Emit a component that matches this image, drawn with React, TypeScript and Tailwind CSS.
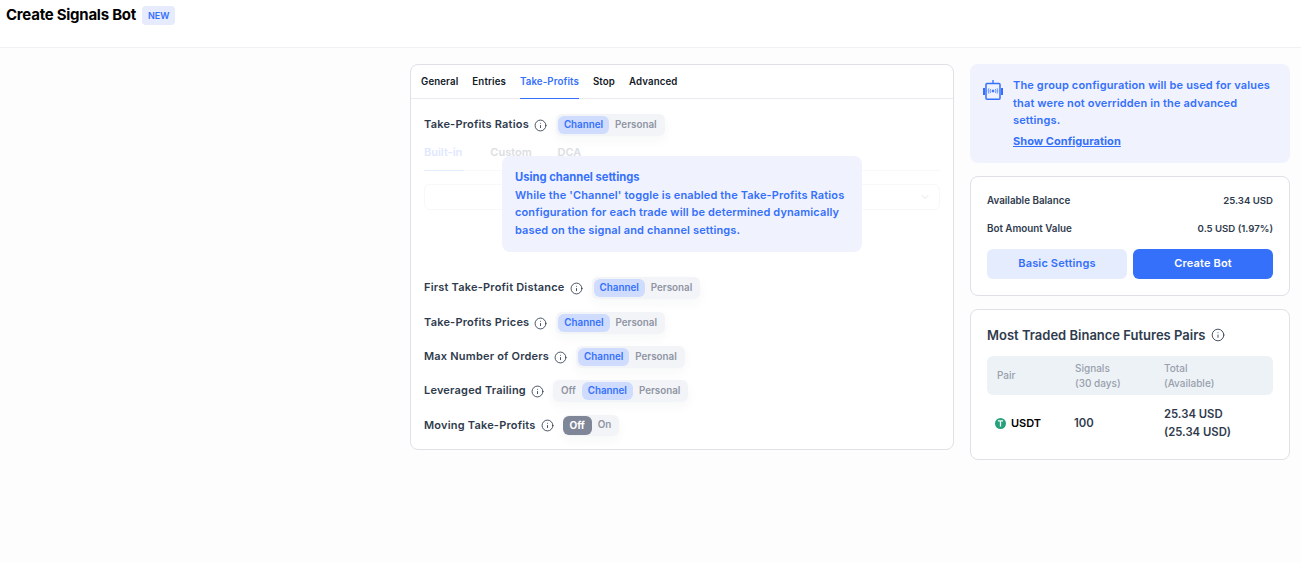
import { ChevronDown, Info } from "lucide-react";

const Segment = ({ options, active }: { options: string[]; active: string }) => (
  <div
    className={
      active === "Off"
        ? "flex h-[21px] items-center rounded-md bg-[#f3f4f8] pr-[2px] shadow-[0_4px_12px_rgba(30,40,60,0.04)]"
        : "flex h-[22px] items-center rounded-md bg-[#f3f4f8] p-[2px] shadow-[0_4px_12px_rgba(30,40,60,0.04)]"
    }
  >
    {options.map((option) => (
      <div
        key={option}
        className={
          option === active
            ? active === "Off"
              ? "flex h-[19px] items-center rounded-md bg-[#7f8697] px-[7px] text-[10px] font-bold text-white"
              : "flex h-[18px] items-center rounded-md bg-[#cfdcfd] px-[6px] text-[9.8px] font-semibold text-[#3570fb]"
            : "flex h-[18px] items-center px-[6px] text-[9.8px] font-semibold text-[#8f95a3]"
        }
      >
        {option}
      </div>
    ))}
  </div>
);

const SettingRow = ({ label, options, active, className }: { label: string; options: string[]; active: string; className: string }) => (
  <div className={`flex items-center ${className}`}>
    <span className="pb-[1px] text-[11px] font-semibold tracking-[0.2px] text-[#2f3b4d]">{label}</span>
    <Info className="ml-[5px] mr-[9px] h-[13px] w-[13px] text-[#2f3b4d]" strokeWidth={1.6} />
    <Segment options={options} active={active} />
  </div>
);

const RobotIcon = () => (
  <svg viewBox="0 0 20 20" className="h-5 w-5 shrink-0 text-[#3570fb]" fill="none" stroke="currentColor">
    <path d="M10 0v3.5" strokeWidth="1.3" />
    <rect x="3" y="3.6" width="14" height="15.6" rx="1" strokeWidth="1.5" />
    <path d="M1 8v7M19 8v7" strokeWidth="2" />
    <circle cx="10" cy="11" r="1" fill="currentColor" />
    <path d="M7.6 9c-.7 1.2-.7 2.8 0 4M12.4 9c.7 1.2.7 2.8 0 4M5.9 8.3c-.9 1.6-.9 3.8 0 5.4M14.1 8.3c.9 1.6.9 3.8 0 5.4" strokeWidth="0.8" />
  </svg>
);

const tabs = ["General", "Entries", "Take-Profits", "Stop", "Advanced"];
const channelOptions = ["Channel", "Personal"];

export default function App() {
  return (
    <div className="min-h-[563px] bg-[#fdfdfe] font-['Inter',sans-serif]">
      {/* Header */}
      <div className="flex h-[48px] items-start gap-[6px] border-b border-[#f0f1f4] bg-white pl-[6px] pt-[5px]">
        <h1 className="text-[15px] leading-[20px] font-bold tracking-[-0.25px] text-black">Create Signals Bot</h1>
        <span className="mt-[1px] flex h-[19px] items-center rounded bg-[#e6ebfd] px-[6px] text-[9px] font-semibold text-[#3570fb]">NEW</span>
      </div>

      <div className="flex items-start gap-4 pl-[410px] pr-[11px] pt-[16px]">
        {/* Main settings card */}
        <div className="h-[386px] w-[544px] shrink-0 rounded-lg border border-[#dfe1e7] bg-white">
          <div className="flex h-[34px] gap-[14px] border-b border-[#e8eaee] px-[10px]">
            {tabs.map((tab) => (
              <div
                key={tab}
                className={
                  tab === "Take-Profits"
                    ? "-mb-px flex items-center border-b border-[#3570fb] pt-[2px] text-[9.7px] font-semibold tracking-[0.12px] text-[#3570fb]"
                    : "flex items-center pt-[2px] text-[9.7px] font-semibold tracking-[0.12px] text-[#111827]"
                }
              >
                {tab}
              </div>
            ))}
          </div>

          <div className="relative px-[13px] pt-[15px]">
            <SettingRow label="Take-Profits Ratios" options={channelOptions} active="Channel" className="" />

            {/* Faded ratio settings under the popover */}
            <div className="mt-[6px] flex h-[29px] gap-[26px] border-b border-[#f7f8f9] text-[11px] font-semibold text-[#dcdee3]">
              <span className="-mb-px border-b border-[#e3ebfe] pr-[2px] pt-[2px] text-[#dfe8fe]">Built-in</span>
              <span className="pt-[2px]">Custom</span>
              <span className="pt-[2px]">DCA</span>
            </div>
            <div className="mt-[13px] flex h-[26px] w-[516px] items-center justify-end rounded-md border border-[#f7f8f9] pr-[8px]">
              <ChevronDown className="h-3 w-3 text-[#e5e7eb]" />
            </div>

            <div className="absolute left-[91px] top-[57px] w-[360px] rounded-lg bg-[#f0f3fe] px-[13px] pb-[13px] pt-[13px] text-[11px] leading-[17.5px] font-semibold text-[#3570fb]">
              <p className="text-[11.2px] font-bold">Using channel settings</p>
              <p className="tracking-[0.13px]">
                While the 'Channel' toggle is enabled the Take-Profits Ratios configuration for each trade will be determined dynamically based on the signal and channel settings.
              </p>
            </div>

            <SettingRow label="First Take-Profit Distance" options={channelOptions} active="Channel" className="mt-[67px]" />
            <SettingRow label="Take-Profits Prices" options={channelOptions} active="Channel" className="mt-[13px]" />
            <SettingRow label="Max Number of Orders" options={channelOptions} active="Channel" className="mt-[12px]" />
            <SettingRow label="Leveraged Trailing" options={["Off", "Channel", "Personal"]} active="Channel" className="mt-[12px]" />
            <SettingRow label="Moving Take-Profits" options={["Off", "On"]} active="Off" className="mt-[13px]" />
          </div>
        </div>

        {/* Right column */}
        <div className="flex w-[320px] shrink-0 flex-col gap-[13px]">
          <div className="flex h-[99px] gap-[10px] rounded-lg bg-[#f0f3fe] pl-[13px] pt-[13px] text-[11px] leading-[17.5px] font-semibold text-[#3570fb]">
            <div className="pt-[3px]">
              <RobotIcon />
            </div>
            <div className="tracking-[0.15px]">
              <p className="w-[265px]">The group configuration will be used for values that were not overridden in the advanced settings.</p>
              <p className="mt-[3px] font-bold tracking-[0.05px] underline">Show Configuration</p>
            </div>
          </div>

          <div className="h-[120px] rounded-lg border border-[#dfe1e7] bg-white px-[16px] pt-[16px]">
            <div className="flex h-[16px] items-center justify-between text-[9.8px] font-semibold text-[#2f3b4d]">
              <span>Available Balance</span>
              <span className="text-[9.6px]">25.34 USD</span>
            </div>
            <div className="mt-[12px] flex h-[16px] items-center justify-between text-[9.8px] font-semibold text-[#2f3b4d]">
              <span>Bot Amount Value</span>
              <span className="text-[9.6px]">0.5 USD (1.97%)</span>
            </div>
            <div className="mt-[12px] flex gap-[6px]">
              <button className="h-[30px] flex-1 rounded-md bg-[#e5ecfe] pb-[1px] text-[11px] font-semibold tracking-[0.15px] text-[#3570fb]">Basic Settings</button>
              <button className="h-[30px] flex-1 rounded-md bg-[#3570fb] pb-[1px] text-[11px] font-semibold tracking-[0.15px] text-white">Create Bot</button>
            </div>
          </div>

          <div className="h-[151px] rounded-lg border border-[#dfe1e7] bg-white px-[16px] pt-[15px]">
            <div className="flex items-center gap-[6px]">
              <h2 className="text-[13px] leading-[20px] font-semibold text-[#2f3b4d]">Most Traded Binance Futures Pairs</h2>
              <Info className="h-[14px] w-[14px] text-[#2f3b4d]" strokeWidth={1.5} />
            </div>
            <div className="mt-[11px] grid h-[39px] grid-cols-[78px_89px_1fr] items-center rounded-md bg-[#edf2f6] pl-[10px] text-[10px] leading-[14.5px] font-medium text-[#98a0ad]">
              <span>Pair</span>
              <span>
                Signals
                <br />
                (30 days)
              </span>
              <span>
                Total
                <br />
                (Available)
              </span>
            </div>
            <div className="mt-[10px] grid grid-cols-[79px_90px_1fr] items-center pl-[8px] text-[11.3px] leading-[18px] font-semibold text-[#2f3b4d]">
              <span className="flex items-center gap-[5px] text-[11px] text-black">
                <svg viewBox="0 0 12 12" className="h-[11px] w-[11px]">
                  <circle cx="6" cy="6" r="6" fill="#26a17b" />
                  <path d="M3.2 3.2h5.6M6 3.2v6" stroke="#fff" strokeWidth="1.4" />
                </svg>
                USDT
              </span>
              <span>100</span>
              <span>
                25.34 USD
                <br />
                (25.34 USD)
              </span>
            </div>
          </div>
        </div>
      </div>
    </div>
  );
}
